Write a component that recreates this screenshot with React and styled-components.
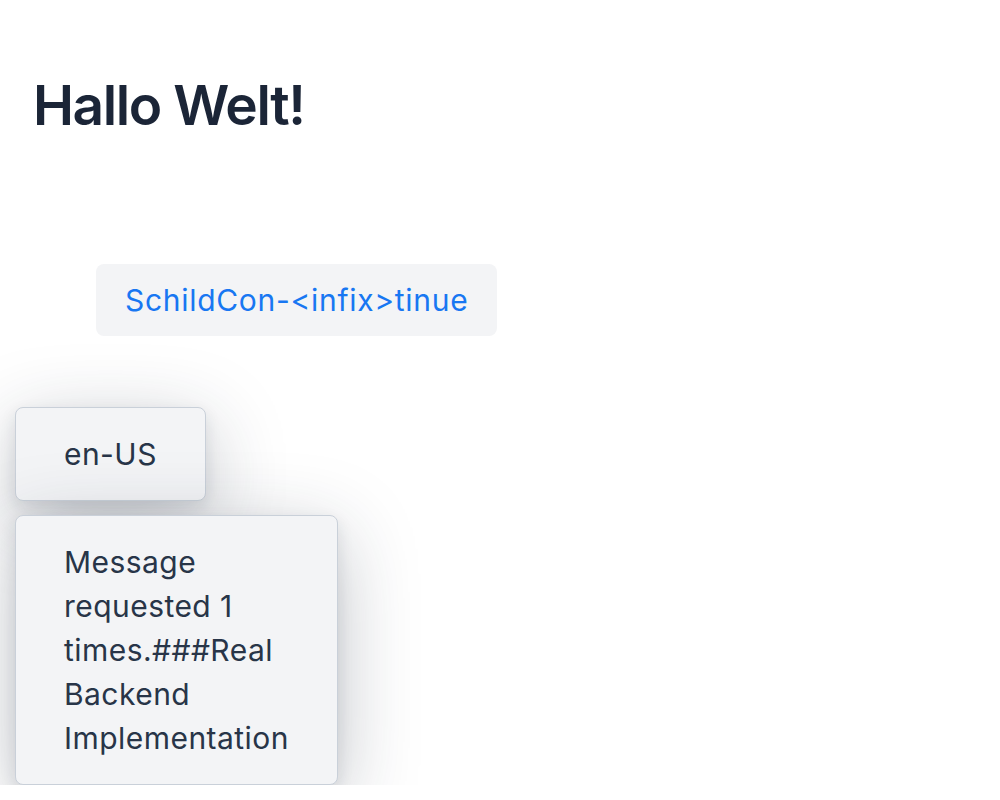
import React from 'react'
import styled, { createGlobalStyle } from 'styled-components'

const GlobalStyle = createGlobalStyle`
  html, body {
    margin: 0;
    padding: 0;
    background: #fff;
  }
  body {
    font-family: Inter, "Noto Sans", "Liberation Sans", sans-serif;
    -webkit-font-smoothing: antialiased;
  }
`

const Page = styled.div`
  display: flex;
  flex-direction: column;
  align-items: flex-start;
  padding: 72px 15px 0;
`

const Heading = styled.h1`
  margin: 0 0 125px 18px;
  font-size: 55px;
  line-height: 67px;
  font-weight: 600;
  color: #1b2537;
  letter-spacing: -1.4px;
`

const ContinueButton = styled.button`
  margin: 0 0 71px 81px;
  padding: 14px 29px;
  border: none;
  border-radius: 8px;
  background: #f3f4f6;
  color: #1877f2;
  font-family: inherit;
  font-size: 30px;
  line-height: 44px;
  letter-spacing: 0.7px;
  cursor: pointer;
`

const Stack = styled.div`
  display: flex;
  flex-direction: column;
  align-items: flex-start;
  gap: 14px;
`

const Card = styled.div`
  padding: 24px 48px;
  border: 1px solid #c9d0d9;
  border-radius: 8px;
  background: #f3f4f6;
  color: #283548;
  font-size: 30px;
  line-height: 44px;
  letter-spacing: 0.45px;
  width: ${props => (props.narrow ? 'min-content' : 'auto')};
  box-shadow: 0 20px 80px rgba(30, 41, 59, 0.28), 0 6px 16px rgba(30, 41, 59, 0.1);
`

export default function App () {
  return (
    <>
      <GlobalStyle />
      <Page>
        <Heading>Hallo Welt!</Heading>
        <ContinueButton>SchildCon-&lt;infix&gt;tinue</ContinueButton>
        <Stack>
          <Card>en-US</Card>
          <Card narrow>Message requested 1 times.###Real Backend Implementation</Card>
        </Stack>
      </Page>
    </>
  )
}
